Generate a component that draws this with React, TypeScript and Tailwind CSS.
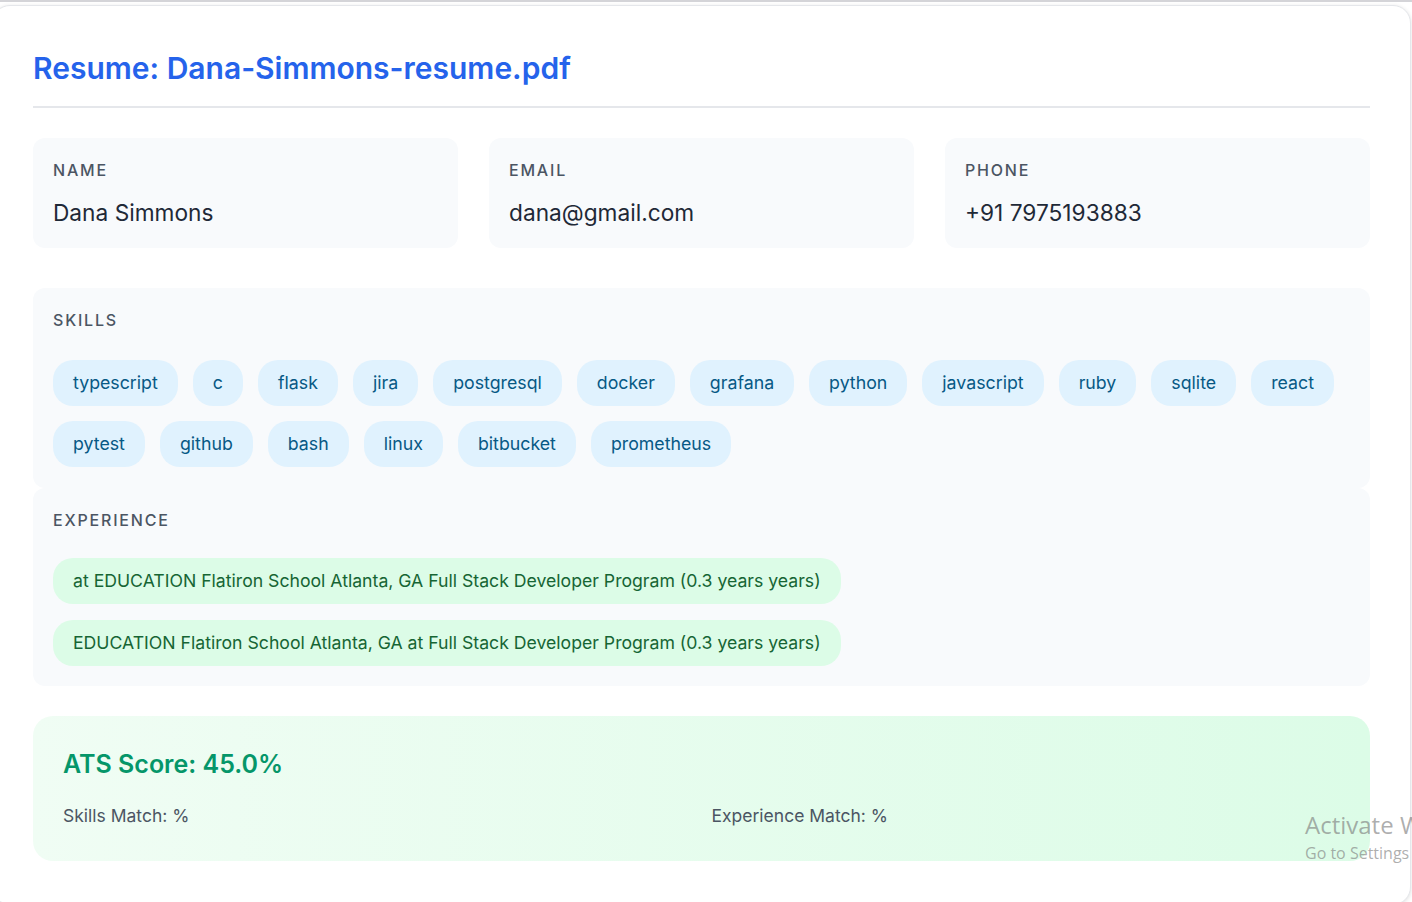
import React from "react";

const skills = [
  "typescript",
  "c",
  "flask",
  "jira",
  "postgresql",
  "docker",
  "grafana",
  "python",
  "javascript",
  "ruby",
  "sqlite",
  "react",
  "pytest",
  "github",
  "bash",
  "linux",
  "bitbucket",
  "prometheus",
];

const experience = [
  "at EDUCATION Flatiron School Atlanta, GA Full Stack Developer Program (0.3 years years)",
  "EDUCATION Flatiron School Atlanta, GA at Full Stack Developer Program (0.3 years years)",
];

export default function App() {
  return (
    <div
      className="relative h-[902px] w-[1412px] overflow-hidden bg-white border-t-2 border-[#d4d4d8] pt-[3px]"
      style={{ fontFamily: "Inter, 'Noto Sans', sans-serif" }}
    >
      <div className="ml-[-8px] w-[1419px] h-[900px] rounded-[18px] border border-[#e5e7eb] bg-white shadow-[0_1px_4px_rgba(0,0,0,0.12)] px-[40px] pt-[44px]">
        <h1 className="text-[30px] leading-[36px] font-semibold text-[#2563eb] pb-[20px] border-b-2 border-[#e5e7eb]">
          Resume: Dana-Simmons-resume.pdf
        </h1>

        <div className="grid grid-cols-3 gap-[31px] mt-[30px]">
          {[
            ["NAME", "Dana Simmons"],
            ["EMAIL", "dana@gmail.com"],
            ["PHONE", "+91 7975193883"],
          ].map(([label, value]) => (
            <div key={label} className="h-[110px] rounded-[12px] bg-[#f8fafc] px-5 pt-5">
              <div className="text-[16px] leading-[24px] tracking-[1.8px] text-[#4b5563] font-medium">
                {label}
              </div>
              <div className="mt-[16px] text-[22.7px] leading-[30px] text-[#1f2937]">{value}</div>
            </div>
          ))}
        </div>

        <div className="mt-[40px] rounded-[12px] bg-[#f8fafc] px-5 pt-5 pb-[21px]">
          <div className="text-[16px] leading-[24px] tracking-[1.8px] text-[#4b5563] font-medium">
            SKILLS
          </div>
          <div className="mt-[28px] flex flex-wrap gap-[15px]">
            {skills.map((s) => (
              <span
                key={s}
                className="h-[46px] flex items-center rounded-[20px] bg-[#e0f2fe] px-5 text-[17.75px] text-[#075985]"
              >
                {s}
              </span>
            ))}
          </div>
        </div>

        <div className="rounded-[12px] bg-[#f8fafc] px-5 pt-5 pb-5">
          <div className="text-[16px] leading-[24px] tracking-[1.8px] text-[#4b5563] font-medium">
            EXPERIENCE
          </div>
          <div className="mt-[26px] flex flex-col items-start gap-[16px]">
            {experience.map((e) => (
              <span
                key={e}
                className="h-[46px] flex items-center rounded-[20px] bg-[#dcfce7] px-5 text-[17.65px] text-[#166534]"
              >
                {e}
              </span>
            ))}
          </div>
        </div>

        <div className="mt-[30px] h-[145px] rounded-[20px] bg-gradient-to-r from-[#f0fdf4] to-[#dcfce7] px-[30px] pt-[30px]">
          <div className="text-[25px] leading-[36px] font-semibold text-[#059669]">ATS Score: 45.0%</div>
          <div className="mt-[21px] grid grid-cols-2 gap-5 text-[17.5px] leading-[26px] text-[#4b5563]">
            <div>Skills Match: %</div>
            <div>Experience Match: %</div>
          </div>
        </div>
      </div>

      <div
        className="absolute left-[1305px] top-[806px] whitespace-nowrap text-[rgba(120,120,120,0.6)]"
        style={{ fontFamily: "'Open Sans', 'Noto Sans', sans-serif" }}
      >
        <div className="text-[24px] leading-[34px]">Activate Windows</div>
        <div className="text-[16px] leading-[22px]">Go to Settings to activate Windows.</div>
      </div>
    </div>
  );
}
